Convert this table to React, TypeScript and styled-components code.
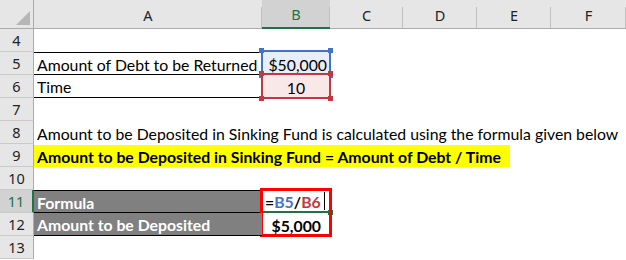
import React, { FC } from "react";
import styled, { createGlobalStyle, css } from "styled-components";

const GlobalStyle = createGlobalStyle`
  html, body {
    margin: 0;
    padding: 0;
    background: #ffffff;
  }
`;

const COLS = "34px 228px 68px 73px 74px 74px 75px";
const GREEN = "#217346";

const Sheet = styled.div`
  width: 626px;
  height: 260px;
  overflow: hidden;
  background: #ffffff;
  font-family: Lato, "Liberation Sans", sans-serif;
`;

const Row = styled.div<{ $header?: boolean }>`
  display: grid;
  grid-template-columns: ${COLS};
  height: ${(p) => (p.$header ? "29px" : "23px")};
`;

const Corner = styled.div`
  position: relative;
  background: #e6e6e6;
  border-right: 1px solid #ababab;
  border-bottom: 1px solid #ababab;
  box-sizing: border-box;
  &::after {
    content: "";
    position: absolute;
    right: 3px;
    bottom: 3px;
    width: 14px;
    height: 14px;
    background: #b6b6b6;
    clip-path: polygon(100% 0, 100% 100%, 0 100%);
  }
`;

const ColHead = styled.div<{ $active?: boolean }>`
  position: relative;
  display: flex;
  align-items: center;
  justify-content: center;
  box-sizing: border-box;
  background: ${(p) => (p.$active ? "#d2d2d2" : "#e6e6e6")};
  color: ${(p) => (p.$active ? GREEN : "#222")};
  border-bottom: ${(p) => (p.$active ? `2px solid ${GREEN}` : "1px solid #ababab")};
  font-family: "Noto Sans", "Open Sans", sans-serif;
  font-size: 14.5px;
  padding-top: 1px;
  &::after {
    content: "";
    position: absolute;
    right: 0;
    top: 7px;
    bottom: 0;
    width: 1px;
    background: #c0c0c0;
  }
`;

const RowHead = styled.div<{ $active?: boolean }>`
  display: flex;
  align-items: center;
  justify-content: center;
  box-sizing: border-box;
  background: ${(p) => (p.$active ? "#d2d2d2" : "#e6e6e6")};
  color: ${(p) => (p.$active ? GREEN : "#222")};
  border-bottom: 1px solid #cacaca;
  border-right: ${(p) => (p.$active ? `2px solid ${GREEN}` : "1px solid #ababab")};
  font-family: "Noto Sans", "Open Sans", sans-serif;
  font-size: 14.5px;
`;

type Align = "left" | "center" | "right";

const Cell = styled.div<{
  $bold?: boolean;
  $fill?: string;
  $color?: string;
  $align?: Align;
  $top?: boolean;
  $bottom?: boolean;
  $span?: boolean;
}>`
  position: relative;
  display: flex;
  align-items: center;
  box-sizing: border-box;
  padding: 1px 3px 0 3px;
  white-space: nowrap;
  font-size: 15.8px;
  font-weight: ${(p) => (p.$bold ? 700 : 400)};
  color: ${(p) => p.$color || "#000"};
  background: ${(p) => p.$fill || "transparent"};
  justify-content: ${(p) =>
    p.$align === "right" ? "flex-end" : p.$align === "center" ? "center" : "flex-start"};
  ${(p) => p.$top && css`border-top: 1px solid #000;`}
  ${(p) => p.$bottom && css`border-bottom: 1px solid #000;`}
  ${(p) => p.$span && css`grid-column: 2 / -1;`}
`;

const Highlight = styled.div`
  width: 476px;
  height: 100%;
  display: flex;
  align-items: center;
  box-sizing: border-box;
  padding: 1px 3px 0 3px;
  margin-left: -3px;
  background: #ffff00;
  font-weight: 700;
`;

const RefBox = styled.div<{ $color: string }>`
  position: absolute;
  left: -1px;
  top: -2px;
  right: -1px;
  bottom: -1px;
  border: 2px solid ${(p) => p.$color};
  pointer-events: none;
`;

const Handle = styled.span<{ $color: string; $x: "l" | "r"; $y: "t" | "b" }>`
  position: absolute;
  width: 5px;
  height: 5px;
  background: ${(p) => p.$color};
  ${(p) => (p.$x === "l" ? "left: -4px;" : "right: -4px;")}
  ${(p) => (p.$y === "t" ? "top: -4px;" : "bottom: -4px;")}
`;

const RefHighlight: FC<{ color: string }> = ({ color }) => (
  <RefBox $color={color}>
    <Handle $color={color} $x="l" $y="t" />
    <Handle $color={color} $x="r" $y="t" />
    <Handle $color={color} $x="l" $y="b" />
    <Handle $color={color} $x="r" $y="b" />
  </RefBox>
);

const ResultBlock = styled.div`
  position: relative;
  grid-column: 3;
  grid-row: 1 / span 2;
  display: grid;
  grid-template-rows: 23px 23px;
`;

const RedFrame = styled.div`
  position: absolute;
  left: -2px;
  top: -2px;
  right: -2px;
  bottom: -1px;
  border: 3px solid #ff0000;
  pointer-events: none;
`;

const EditCell = styled(Cell)`
  border-bottom: 2px solid ${GREEN};
  &::after {
    content: "";
    position: absolute;
    right: -3px;
    bottom: -4px;
    width: 5px;
    height: 5px;
    background: ${GREEN};
  }
`;

const Ref = styled.span<{ $color: string }>`
  color: ${(p) => p.$color};
`;

const Caret = styled.span`
  display: inline-block;
  width: 1px;
  height: 18px;
  margin-left: 3px;
  background: #000;
`;

const GroupGrid = styled.div`
  display: grid;
  grid-template-columns: ${COLS};
  grid-template-rows: 23px 23px;
`;

const columns = ["A", "B", "C", "D", "E", "F"];

const Empty: FC<{ n: number; active?: boolean }> = ({ n, active }) => (
  <Row>
    <RowHead $active={active}>{n}</RowHead>
  </Row>
);

export default function App() {
  return (
    <>
      <GlobalStyle />
      <Sheet>
        <Row $header>
          <Corner />
          {columns.map((c) => (
            <ColHead key={c} $active={c === "B"}>
              {c}
            </ColHead>
          ))}
        </Row>

        <Empty n={4} />

        <Row>
          <RowHead>5</RowHead>
          <Cell $top $bottom>
            Amount of Debt to be Returned
          </Cell>
          <Cell $fill="#e7eef8" $align="right">
            $50,000
            <RefHighlight color="#4472c4" />
          </Cell>
        </Row>

        <Row>
          <RowHead>6</RowHead>
          <Cell $bottom>Time</Cell>
          <Cell $fill="#f8e8e8" $align="center">
            10
            <RefHighlight color="#c0393e" />
          </Cell>
        </Row>

        <Empty n={7} />

        <Row>
          <RowHead>8</RowHead>
          <Cell $span>
            Amount to be Deposited in Sinking Fund is calculated using the formula given below
          </Cell>
        </Row>

        <Row>
          <RowHead>9</RowHead>
          <Cell $span>
            <Highlight>Amount to be Deposited in Sinking Fund = Amount of Debt / Time</Highlight>
          </Cell>
        </Row>

        <Empty n={10} />

        <GroupGrid>
          <RowHead $active>11</RowHead>
          <Cell $bold $fill="#808080" $color="#fff" $top $bottom>
            Formula
          </Cell>
          <ResultBlock>
            <EditCell $bold>
              =<Ref $color="#4472c4">B5</Ref>/<Ref $color="#c0393e">B6</Ref>
              <Caret />
            </EditCell>
            <Cell $bold $align="right" style={{ paddingRight: 9 }}>
              $5,000
            </Cell>
            <RedFrame />
          </ResultBlock>
          <RowHead style={{ gridRow: 2 }}>12</RowHead>
          <Cell $bold $fill="#808080" $color="#fff" $bottom style={{ gridRow: 2, gridColumn: 2 }}>
            Amount to be Deposited
          </Cell>
        </GroupGrid>

        <Empty n={13} />
      </Sheet>
    </>
  );
}
